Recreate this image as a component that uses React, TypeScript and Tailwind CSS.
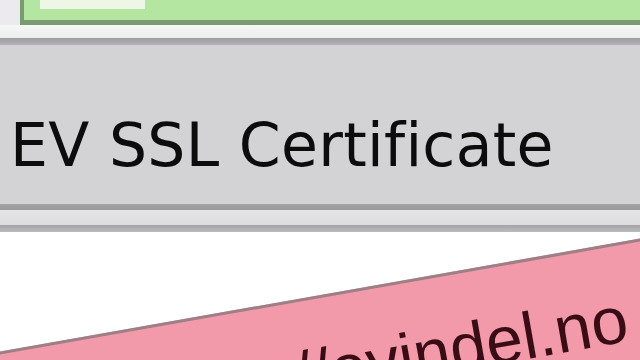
import React from "react";

export default function App() {
  return (
    <div className="w-[640px] h-[360px] overflow-hidden flex flex-col bg-white">
      {/* top address bar strip */}
      <div className="h-[25px] flex bg-[#eef0ee]">
        <div className="w-[20px] bg-[#eceaee]" />
        <div className="flex-1 border-l-[4px] border-b-[5px] border-[#7c9a72] bg-[#b4e6a2] flex pl-[16px]">
          <div className="w-[105px] h-[9px] bg-[#eef7e6]" />
        </div>
      </div>
      <div className="h-[13px] bg-gradient-to-b from-[#f6f8f6] to-[#eceeee]" />
      <div className="h-[7px] bg-gradient-to-b from-[#9c9c9e] to-[#b4b2b6]" />
      {/* certificate panel */}
      <div className="h-[159px] bg-[#d3d3d6] flex items-center pl-[10px] pt-[40px]">
        <span
          className="text-[60px] leading-none text-[#0c0c0c] tracking-[0.3px]"
          style={{ fontFamily: '"DejaVu Sans", sans-serif' }}
        >
          EV SSL Certificate
        </span>
      </div>
      <div className="h-[6px] bg-gradient-to-b from-[#a2a2a4] to-[#9a9a9c]" />
      <div className="h-[15px] bg-gradient-to-b from-[#e4e4e6] to-[#dcdcde]" />
      <div className="h-[7px] bg-gradient-to-b from-[#a4a4a6] to-[#bcbcbe]" />
      {/* page area */}
      <div className="flex-1 relative overflow-hidden bg-white">
        <div className="absolute left-[-60px] top-[130px] w-[800px] h-[200px] origin-top-left rotate-[-10deg] bg-[#f29aaa] border-t-[3px] border-[#9c8086]">
          <span
            className="absolute right-[116px] top-[40px] text-[66px] leading-none text-[#3a0c16] whitespace-nowrap"
            style={{ fontFamily: '"Liberation Sans", sans-serif' }}
          >
            http://evindel.no
          </span>
        </div>
      </div>
    </div>
  );
}
